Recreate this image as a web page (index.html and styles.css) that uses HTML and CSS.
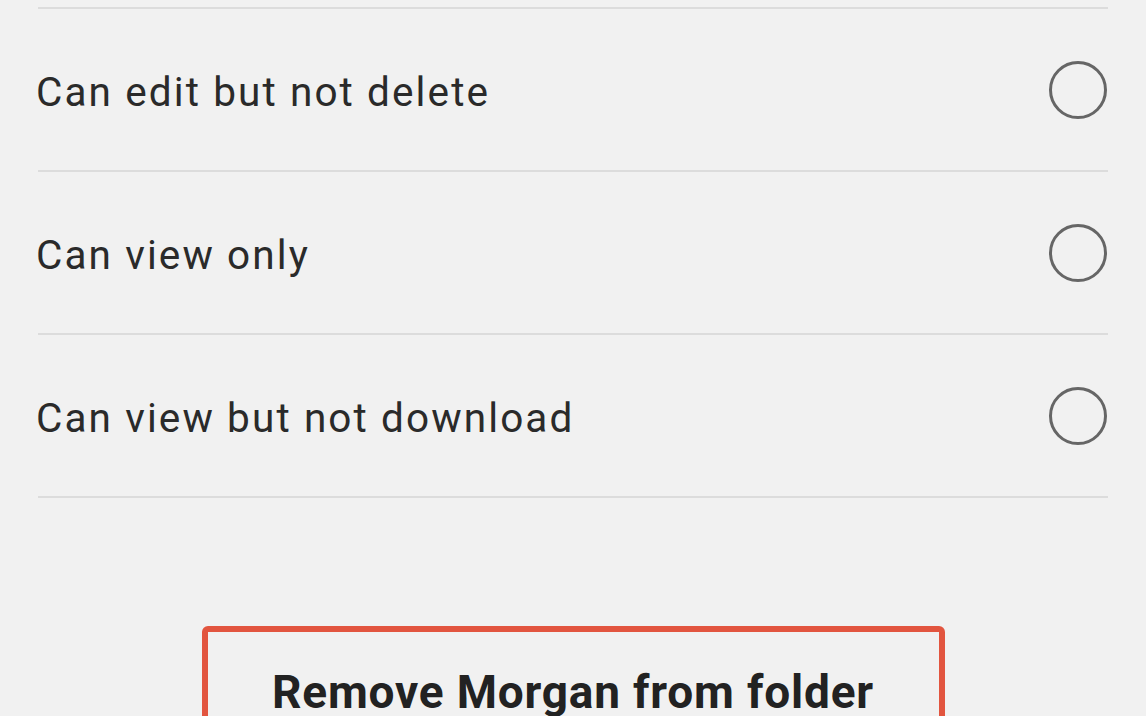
FILE: index.html
```html
<!DOCTYPE html>
<html>
<head>
<meta charset="utf-8">
<link rel="stylesheet" href="styles.css">
</head>
<body>
<div class="page">
  <ul class="options">
    <li class="option"><span class="label">Can edit but not delete</span><span class="radio"></span></li>
    <li class="option"><span class="label">Can view only</span><span class="radio"></span></li>
    <li class="option"><span class="label">Can view but not download</span><span class="radio"></span></li>
  </ul>
  <div class="actions">
    <button class="remove">Remove Morgan from folder</button>
  </div>
</div>
</body>
</html>
```
FILE: styles.css
```css
html, body {
  margin: 0;
  padding: 0;
  background: #f1f1f1;
  overflow: hidden;
}
.page {
  width: 1146px;
  height: 716px;
  padding-top: 7px;
  box-sizing: border-box;
  font-family: Roboto, "Noto Sans", sans-serif;
}
.options {
  list-style: none;
  margin: 0 38px;
  padding: 0;
  border-top: 2px solid #dcdcdc;
}
.option {
  height: 161px;
  border-bottom: 2px solid #dcdcdc;
  display: flex;
  align-items: center;
  justify-content: space-between;
}
.label {
  font-size: 40.5px;
  color: #2a2a2a;
  letter-spacing: 2.1px;
  margin-left: -2px;
  padding-top: 4px;
}
.radio {
  width: 52px;
  height: 52px;
  border: 3px solid #666;
  border-radius: 50%;
  margin-right: 1px;
}
.actions {
  display: flex;
  justify-content: center;
  padding-top: 128px;
}
.remove {
  width: 743px;
  height: 130px;
  border: 6px solid #e2553f;
  border-radius: 6px;
  background: #f1f1f1;
  font-family: Roboto, "Noto Sans", sans-serif;
  font-weight: 700;
  font-size: 46px;
  letter-spacing: 0.8px;
  color: #222;
  padding: 33px 0 0;
  display: flex;
  justify-content: center;
  align-items: flex-start;
}
```
